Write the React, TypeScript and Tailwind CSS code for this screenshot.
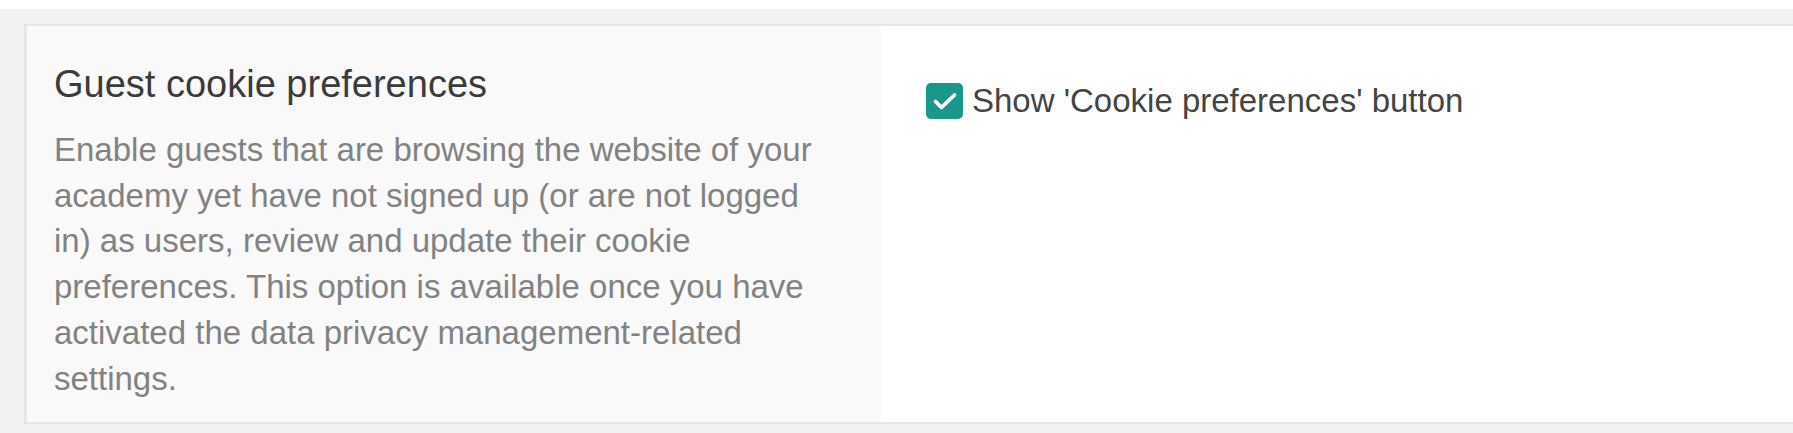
export default function App() {
  return (
    <div className="w-[1793px] h-[433px] bg-white pt-[9px] font-['Liberation_Sans',Arial,sans-serif]">
      <div className="bg-[#f2f2f2] pl-[24px] pt-[15px] h-[424px]">
        <div className="flex h-[400px] border-l-[3px] border-y-[2px] border-[#e6e6e6]">
          {/* description column */}
          <div className="w-[854px] shrink-0 bg-[#f9f9f9] pl-[27px] pr-[62px] pt-[35px]">
            <h2 className="text-[38px] leading-[46px] text-[#3b3b3b]">Guest cookie preferences</h2>
            <p className="mt-[20px] text-[33px] leading-[45.7px] text-[#828282]">
              Enable guests that are browsing the website of your academy yet have not signed up (or are not logged
              in) as users, review and update their cookie preferences. This option is available once you have
              activated the data privacy management-related settings.
            </p>
          </div>

          {/* setting column */}
          <div className="flex-1 bg-white pl-[45px] pt-[57px]">
            <label className="flex items-center gap-[9px] cursor-pointer">
              <span className="flex h-[36px] w-[37px] items-center justify-center rounded-[5px] bg-[#17988b]">
                <svg width="28" height="28" viewBox="0 0 28 28" fill="none">
                  <path d="M4.5 14.5l6 6L23.5 8" stroke="white" strokeWidth="3.8" strokeLinecap="round" strokeLinejoin="round" />
                </svg>
              </span>
              <span className="text-[33px] leading-[36px] text-[#444]">Show 'Cookie preferences' button</span>
            </label>
          </div>
        </div>
      </div>
    </div>
  );
}
